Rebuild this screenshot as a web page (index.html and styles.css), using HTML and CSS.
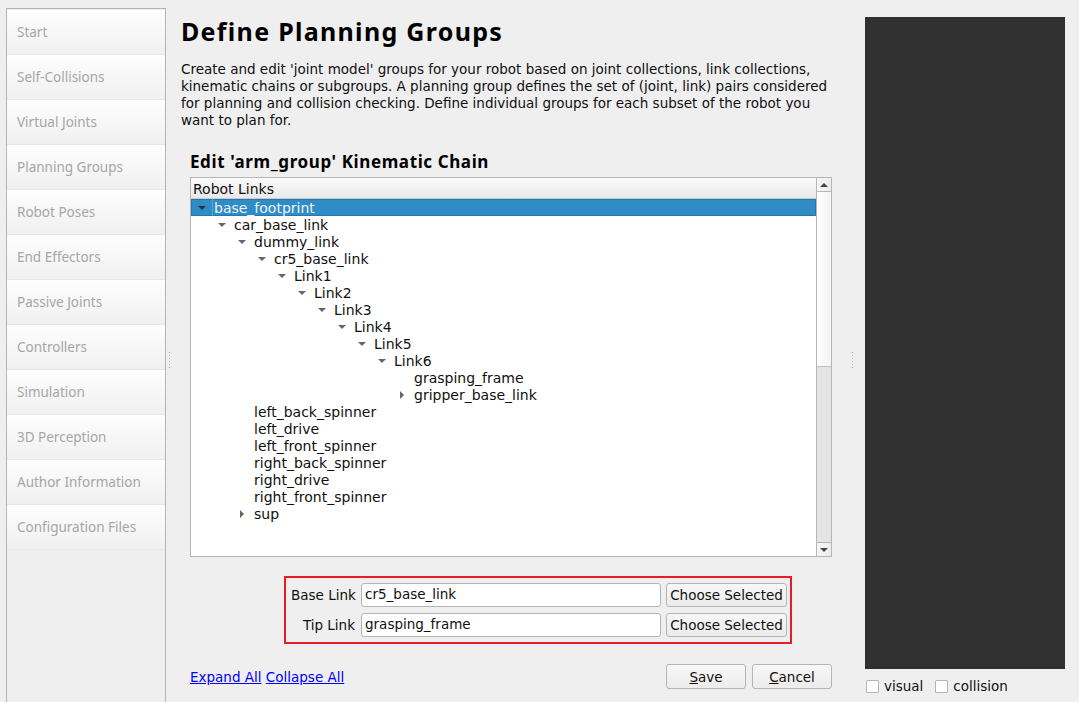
FILE: index.html
```html
<!DOCTYPE html>
<html>
<head>
<meta charset="utf-8">
<link rel="stylesheet" href="styles.css">
</head>
<body>
<div class="app">
  <nav class="sidebar">
    <div class="nav-item">Start</div>
    <div class="nav-item">Self-Collisions</div>
    <div class="nav-item">Virtual Joints</div>
    <div class="nav-item">Planning Groups</div>
    <div class="nav-item">Robot Poses</div>
    <div class="nav-item">End Effectors</div>
    <div class="nav-item">Passive Joints</div>
    <div class="nav-item">Controllers</div>
    <div class="nav-item">Simulation</div>
    <div class="nav-item">3D Perception</div>
    <div class="nav-item">Author Information</div>
    <div class="nav-item">Configuration Files</div>
  </nav>
  <div class="splitter left"><span class="grip"></span></div>
  <main class="main">
    <h1 class="title">Define Planning Groups</h1>
    <p class="desc">Create and edit 'joint model' groups for your robot based on joint collections, link collections,<br>kinematic chains or subgroups. A planning group defines the set of (joint, link) pairs considered<br>for planning and collision checking. Define individual groups for each subset of the robot you<br>want to plan for.</p>
    <section class="group">
      <h2 class="subtitle">Edit 'arm_group' Kinematic Chain</h2>
      <div class="tree">
        <div class="tree-body">
          <div class="tree-header">Robot Links</div>
          <div class="rows">
            <div class="row d0 selected"><span class="ind open"></span><span class="lbl">base_footprint</span></div>
            <div class="row d1"><span class="ind open"></span><span class="lbl">car_base_link</span></div>
            <div class="row d2"><span class="ind open"></span><span class="lbl">dummy_link</span></div>
            <div class="row d3"><span class="ind open"></span><span class="lbl">cr5_base_link</span></div>
            <div class="row d4"><span class="ind open"></span><span class="lbl">Link1</span></div>
            <div class="row d5"><span class="ind open"></span><span class="lbl">Link2</span></div>
            <div class="row d6"><span class="ind open"></span><span class="lbl">Link3</span></div>
            <div class="row d7"><span class="ind open"></span><span class="lbl">Link4</span></div>
            <div class="row d8"><span class="ind open"></span><span class="lbl">Link5</span></div>
            <div class="row d9"><span class="ind open"></span><span class="lbl">Link6</span></div>
            <div class="row d10"><span class="ind"></span><span class="lbl">grasping_frame</span></div>
            <div class="row d10"><span class="ind closed"></span><span class="lbl">gripper_base_link</span></div>
            <div class="row d2"><span class="ind"></span><span class="lbl">left_back_spinner</span></div>
            <div class="row d2"><span class="ind"></span><span class="lbl">left_drive</span></div>
            <div class="row d2"><span class="ind"></span><span class="lbl">left_front_spinner</span></div>
            <div class="row d2"><span class="ind"></span><span class="lbl">right_back_spinner</span></div>
            <div class="row d2"><span class="ind"></span><span class="lbl">right_drive</span></div>
            <div class="row d2"><span class="ind"></span><span class="lbl">right_front_spinner</span></div>
            <div class="row d2"><span class="ind closed"></span><span class="lbl">sup</span></div>
          </div>
        </div>
        <div class="scrollbar">
          <div class="sb-btn up"><span class="sb-arrow up"></span></div>
          <div class="sb-thumb"></div>
          <div class="sb-track"></div>
          <div class="sb-btn down"><span class="sb-arrow down"></span></div>
        </div>
      </div>
      <div class="chain-box">
        <label class="field-label">Base Link</label>
        <div class="input">cr5_base_link</div>
        <button class="btn choose">Choose Selected</button>
        <label class="field-label">Tip Link</label>
        <div class="input">grasping_frame</div>
        <button class="btn choose">Choose Selected</button>
      </div>
      <div class="footer">
        <div class="links"><a href="#" class="link">Expand All</a> <a href="#" class="link">Collapse All</a></div>
        <div class="actions">
          <button class="btn action"><u>S</u>ave</button>
          <button class="btn action"><u>C</u>ancel</button>
        </div>
      </div>
    </section>
  </main>
  <div class="splitter right"><span class="grip"></span></div>
  <aside class="viewer">
    <div class="viewport"></div>
    <div class="checks">
      <label class="check"><span class="box"></span>visual</label>
      <label class="check"><span class="box"></span>collision</label>
    </div>
  </aside>
</div>
</body>
</html>
```
FILE: styles.css
```css
* { box-sizing: border-box; }
html, body { margin: 0; padding: 0; }
body {
  background: #efefef;
  font-family: "DejaVu Sans", "Noto Sans", sans-serif;
  font-size: 13.5px;
  color: #101010;
  width: 1079px;
  height: 702px;
  overflow: hidden;
}
.app {
  display: flex;
  height: 702px;
}

/* Sidebar */
.sidebar {
  margin: 8px 0 0 6px;
  width: 160px;
  border: 1px solid #b4b4b4;
  border-bottom: none;
  padding-top: 1px;
  background: #efefef;
  display: flex;
  flex-direction: column;
}
.nav-item {
  height: 45px;
  line-height: 44px;
  padding-left: 10px;
  font-family: "Noto Sans", sans-serif;
  font-size: 13.5px;
  color: #a6a6a6;
  background: linear-gradient(#fefefe, #f0f0f0);
  border-bottom: 1px solid #e8e8e8;
  white-space: nowrap;
}

/* Splitters */
.splitter {
  display: flex;
  align-items: center;
  justify-content: center;
}
.splitter.left { width: 15px; justify-content: flex-start; padding-left: 3px; }
.splitter.right { width: 33px; justify-content: flex-start; padding-left: 20px; }
.grip {
  width: 1px;
  height: 16px;
  margin-top: 17px;
  background: repeating-linear-gradient(#b8b8b8 0 1px, transparent 1px 3px);
}

/* Main */
.main {
  width: 651px;
  display: flex;
  flex-direction: column;
}
.title {
  margin: 16px 0 0 0;
  font-family: "Noto Sans", sans-serif;
  font-size: 25px;
  letter-spacing: 1.3px;
  line-height: 30px;
  font-weight: bold;
  color: #000;
}
.desc {
  margin: 15px 0 0 0;
  line-height: 17px;
  white-space: nowrap;
}
.group {
  padding-left: 9px;
  display: flex;
  flex-direction: column;
}
.subtitle {
  margin: 23px 0 0 0;
  font-family: "Noto Sans", sans-serif;
  font-size: 17px;
  letter-spacing: 0.6px;
  line-height: 20px;
  font-weight: bold;
  color: #000;
}

/* Tree */
.tree {
  margin-top: 5px;
  width: 642px;
  height: 380px;
  border: 1px solid #b6b6b6;
  background: #fff;
  display: flex;
  font-size: 14px;
}
.tree-body {
  flex: 1;
  display: flex;
  flex-direction: column;
}
.tree-header {
  height: 21px;
  line-height: 18px;
  padding: 2px 0 0 2px;
  background: linear-gradient(#fcfcfc, #e9e9e9);
  border-bottom: 1px solid #cacaca;
}
.rows { display: flex; flex-direction: column; }
.row {
  height: 17px;
  line-height: 17px;
  display: flex;
  align-items: flex-start;
  white-space: nowrap;
}
.row.selected {
  background: #308cc6;
  color: #eef4fa;
  box-shadow: inset 0 0 0 1px #2776ad;
}
.row.selected .lbl {
  height: 17px;
  margin-left: 1px;
  padding-left: 2px;
  flex: 1;
  box-shadow: inset 1px 0 0 #5aa6d6;
}
.d0 { padding-left: 0; }
.d1 { padding-left: 20px; }
.d2 { padding-left: 40px; }
.d3 { padding-left: 60px; }
.d4 { padding-left: 80px; }
.d5 { padding-left: 100px; }
.d6 { padding-left: 120px; }
.d7 { padding-left: 140px; }
.d8 { padding-left: 160px; }
.d9 { padding-left: 180px; }
.d10 { padding-left: 200px; }
.ind {
  width: 20px;
  height: 17px;
  flex: none;
  position: relative;
}
.ind.open::after {
  content: "";
  position: absolute;
  left: 7px;
  top: 7px;
  border-left: 4px solid transparent;
  border-right: 4px solid transparent;
  border-top: 4px solid #666;
}
.selected .ind.open::after { border-top-color: #1f3344; }
.ind.closed::after {
  content: "";
  position: absolute;
  left: 9px;
  top: 5px;
  border-top: 4px solid transparent;
  border-bottom: 4px solid transparent;
  border-left: 4px solid #666;
}
.lbl { margin-left: 3px; padding-top: 1px; line-height: 16px; }

/* Scrollbar */
.scrollbar {
  width: 15px;
  border-left: 1px solid #b6b6b6;
  display: flex;
  flex-direction: column;
}
.sb-btn {
  height: 14px;
  background: linear-gradient(90deg, #f6f6f6, #ececec);
  display: flex;
  align-items: center;
  justify-content: center;
  flex: none;
}
.sb-btn.up { border-bottom: 1px solid #b6b6b6; }
.sb-btn.down { border-top: 1px solid #b6b6b6; }
.sb-arrow { width: 0; height: 0; }
.sb-arrow.up {
  border-left: 4px solid transparent;
  border-right: 4px solid transparent;
  border-bottom: 4px solid #444;
}
.sb-arrow.down {
  border-left: 4px solid transparent;
  border-right: 4px solid transparent;
  border-top: 4px solid #444;
}
.sb-thumb {
  height: 175px;
  background: linear-gradient(90deg, #ffffff, #f3f3f3);
  border-bottom: 1px solid #c0c0c0;
  flex: none;
}
.sb-track {
  flex: 1;
  background: #e4e4e4;
}

/* Chain box */
.chain-box {
  margin: 19px 0 0 94px;
  width: 508px;
  height: 68px;
  border: 2px solid #e41e26;
  padding: 5px 0 0 5px;
  display: grid;
  grid-template-columns: 65px 300px 121px;
  grid-auto-rows: 24px;
  column-gap: 5px;
  row-gap: 6px;
  align-items: center;
}
.field-label {
  text-align: right;
  padding-right: 1px;
  white-space: nowrap;
  line-height: 20px;
}
.input {
  height: 24px;
  line-height: 20px;
  border: 1px solid #b4b4b4;
  border-radius: 3px;
  background: #fff;
  padding-left: 3px;
  white-space: nowrap;
}
.btn {
  font-family: inherit;
  font-size: inherit;
  color: #101010;
  border: 1px solid #b4b4b4;
  border-radius: 3px;
  background: linear-gradient(#f7f7f7, #ececec);
  padding: 0;
  margin: 0;
  white-space: nowrap;
}
.btn.choose { height: 24px; line-height: 20px; padding-bottom: 1px; }

/* Footer */
.footer {
  margin-top: 20px;
  width: 642px;
  display: flex;
  justify-content: space-between;
  align-items: center;
  height: 25px;
}
.links { padding-top: 1px; }
.link {
  color: #0000ff;
  text-decoration: underline;
}
.actions { display: flex; gap: 6px; }
.btn.action {
  width: 80px;
  height: 25px;
  line-height: 21px;
  padding-top: 1px;
}

/* Viewer */
.viewer {
  margin-top: 17px;
  width: 200px;
  display: flex;
  flex-direction: column;
}
.viewport {
  height: 652px;
  background: #303030;
}
.checks {
  display: flex;
  gap: 12px;
  margin-top: 9px;
  padding-left: 1px;
}
.check {
  display: flex;
  align-items: center;
  gap: 5px;
  line-height: 17px;
}
.box {
  width: 13px;
  height: 13px;
  border: 1px solid #b4b4b4;
  background: #fff;
  border-radius: 1px;
}
```
